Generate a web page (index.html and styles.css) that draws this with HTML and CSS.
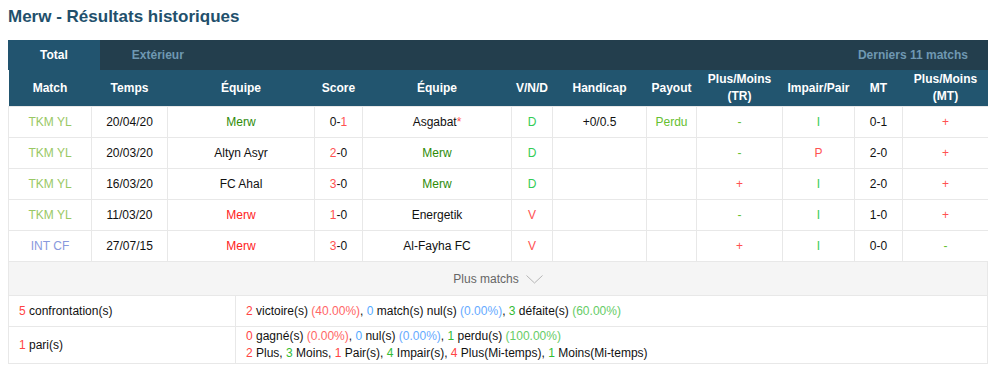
FILE: index.html
```html
<!DOCTYPE html>
<html lang="fr">
  <head>
    <meta charset="UTF-8" />
    <title>Merw - Résultats historiques</title>
    <link rel="stylesheet" href="styles.css">
  </head>
  <body>
    <h2 class="title">Merw - Résultats historiques</h2>
    <div class="box">
      <div class="tabs">
        <span class="tab active">Total</span>
        <span class="tab">Extérieur</span>
        <span class="last">Derniers 11 matchs</span>
      </div>
      <table class="results">
        <colgroup>
          <col style="width:83px"><col style="width:76px"><col style="width:147px"><col style="width:48px">
          <col style="width:149px"><col style="width:41px"><col style="width:94px"><col style="width:50px">
          <col style="width:86px"><col style="width:72px"><col style="width:48px"><col style="width:86px">
        </colgroup>
        <thead>
          <tr>
            <th>Match</th><th>Temps</th><th>Équipe</th><th>Score</th><th>Équipe</th><th>V/N/D</th>
            <th>Handicap</th><th>Payout</th><th>Plus/Moins<br>(TR)</th><th>Impair/Pair</th><th>MT</th><th>Plus/Moins<br>(MT)</th>
          </tr>
        </thead>
        <tbody>
          <tr>
            <td class="lg">TKM YL</td><td>20/04/20</td><td class="dg">Merw</td>
            <td>0-<span class="r">1</span></td><td>Asgabat<span class="r">*</span></td><td class="g">D</td>
            <td>+0/0.5</td><td class="pg">Perdu</td><td class="pg">-</td><td class="g">I</td><td>0-1</td><td class="r">+</td>
          </tr>
          <tr>
            <td class="lg">TKM YL</td><td>20/03/20</td><td>Altyn Asyr</td>
            <td><span class="r">2</span>-0</td><td class="dg">Merw</td><td class="g">D</td>
            <td></td><td></td><td class="pg">-</td><td class="r">P</td><td>2-0</td><td class="r">+</td>
          </tr>
          <tr>
            <td class="lg">TKM YL</td><td>16/03/20</td><td>FC Ahal</td>
            <td><span class="r">3</span>-0</td><td class="dg">Merw</td><td class="g">D</td>
            <td></td><td></td><td class="r">+</td><td class="g">I</td><td>2-0</td><td class="r">+</td>
          </tr>
          <tr>
            <td class="lg">TKM YL</td><td>11/03/20</td><td class="rr">Merw</td>
            <td><span class="r">1</span>-0</td><td>Energetik</td><td class="r">V</td>
            <td></td><td></td><td class="pg">-</td><td class="g">I</td><td>1-0</td><td class="r">+</td>
          </tr>
          <tr>
            <td class="lb">INT CF</td><td>27/07/15</td><td class="rr">Merw</td>
            <td><span class="r">3</span>-0</td><td>Al-Fayha FC</td><td class="r">V</td>
            <td></td><td></td><td class="r">+</td><td class="g">I</td><td>0-0</td><td class="pg">-</td>
          </tr>
        </tbody>
      </table>
      <div class="more">
        Plus matchs
        <svg width="17" height="9" viewBox="0 0 17 9"><path d="M0.5 0.5 L8.5 8 L16.5 0.5" fill="none" stroke="#b5b5b5" stroke-width="1"/></svg>
      </div>
      <table class="summary">
        <tr>
          <td class="label"><span class="n-r">5</span> confrontation(s)</td>
          <td><span class="n-r">2</span> victoire(s) <span class="p-r">(40.00%)</span>, <span class="n-b">0</span> match(s) nul(s) <span class="p-b">(0.00%)</span>, <span class="n-g">3</span> défaite(s) <span class="p-g">(60.00%)</span></td>
        </tr>
        <tr>
          <td class="label"><span class="n-r">1</span> pari(s)</td>
          <td>
            <span class="n-r">0</span> gagné(s) <span class="p-r">(0.00%)</span>, <span class="n-b">0</span> nul(s) <span class="p-b">(0.00%)</span>, <span class="n-g">1</span> perdu(s) <span class="p-g">(100.00%)</span><br>
            <span class="n-r">2</span> Plus, <span class="n-g">3</span> Moins, <span class="n-r">1</span> Pair(s), <span class="n-g">4</span> Impair(s), <span class="n-r">4</span> Plus(Mi-temps), <span class="n-g">1</span> Moins(Mi-temps)
          </td>
        </tr>
      </table>
    </div>
  </body>
</html>
```
FILE: styles.css
```css
body {
  margin: 8px;
  font-family: "Liberation Sans", Arial, sans-serif;
  font-size: 12px;
  color: #111;
  background: #fff;
}

.title {
  margin: 0 0 14px;
  font-size: 17px;
  line-height: 18px;
  color: #22506c;
}

.box {
  width: 980px;
}

/* onglets */
.tabs {
  display: flex;
  align-items: center;
  height: 30px;
  background: #233e4d;
  font-weight: bold;
  color: #6f98b2;
}

.tab {
  height: 30px;
  line-height: 30px;
  padding: 0 32px;
}

.tab.active {
  background: #22546f;
  color: #fff;
}

.last {
  margin-left: auto;
  padding-right: 20px;
}

/* tableau des résultats */
.results {
  width: 980px;
  table-layout: fixed;
  border-collapse: collapse;
}

.results th {
  height: 36px;
  padding: 0;
  background: #22556f;
  color: #fff;
  font-weight: bold;
  line-height: 17px;
  text-align: center;
}

.results td {
  height: 30px;
  padding: 0;
  text-align: center;
  border: 1px solid #e8e8e8;
}

.lg { color: #99c864; }
.lb { color: #8899dd; }
.dg { color: #2e8b08; }
.rr { color: #ff2222; }
.r { color: #ff5252; }
.g { color: #33cc55; }
.pg { color: #66c030; }

/* plus de matchs */
.more {
  display: flex;
  align-items: center;
  justify-content: center;
  gap: 7px;
  height: 33px;
  background: #f5f5f5;
  color: #666;
  border-left: 1px solid #e8e8e8;
  border-right: 1px solid #e8e8e8;
}

.more svg {
  margin-top: 1px;
}

/* résumé */
.summary {
  width: 980px;
  border-collapse: collapse;
}

.summary td {
  padding: 1px 10px;
  height: 28px;
  line-height: 17px;
  border: 1px solid #e8e8e8;
}

.summary td.label {
  width: 206px;
}

.n-r { color: #ff4444; }
.n-b { color: #55aaff; }
.n-g { color: #33bb33; }
.p-r { color: #ff6666; }
.p-b { color: #66aaff; }
.p-g { color: #66cc66; }
```
